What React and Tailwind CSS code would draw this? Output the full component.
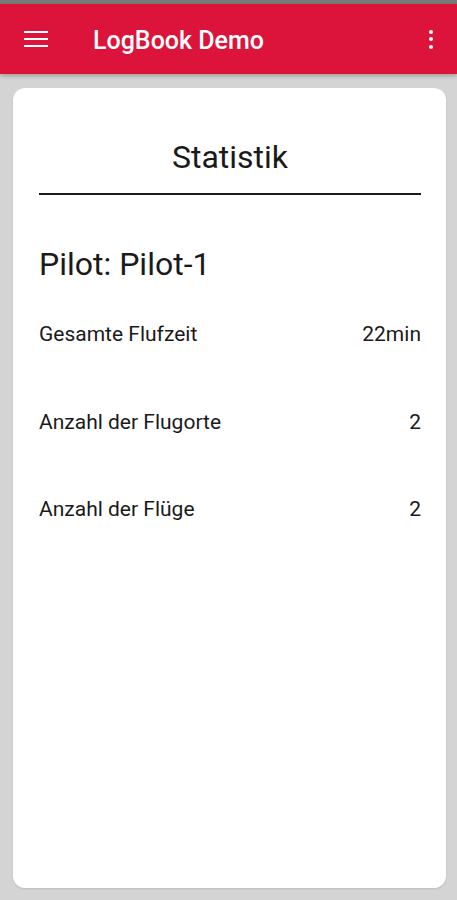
export default function App() {
  const rows = [
    ["Gesamte Flufzeit", "22min"],
    ["Anzahl der Flugorte", "2"],
    ["Anzahl der Flüge", "2"],
  ];
  return (
    <div className="w-[457px] h-[900px] bg-[#d4d4d4] flex flex-col overflow-hidden" style={{ fontFamily: "Roboto, 'Noto Sans', sans-serif" }}>
      <div className="h-[4px] bg-[#7a7a7a] shrink-0" />
      <div className="h-[70px] bg-[#dc143c] shrink-0 flex items-center relative shadow-[0_2px_4px_rgba(0,0,0,0.25)] z-10">
        <div className="ml-[24px] w-[24px] flex flex-col gap-[4.5px]">
          <div className="h-[2.5px] bg-white" />
          <div className="h-[2.5px] bg-white" />
          <div className="h-[2.5px] bg-white" />
        </div>
        <div className="ml-[45px] mt-[2px] text-white text-[25px] leading-none font-medium">LogBook Demo</div>
        <div className="ml-auto mr-[24px] flex flex-col gap-[3.5px] items-center">
          <div className="w-[4px] h-[4px] rounded-full bg-white" />
          <div className="w-[4px] h-[4px] rounded-full bg-white" />
          <div className="w-[4px] h-[4px] rounded-full bg-white" />
        </div>
      </div>
      <div className="flex-1 pl-[13px] pr-[11px] pt-[14px] pb-[12px] flex">
        <div className="flex-1 bg-white rounded-[12px] shadow-[0_1px_2px_rgba(0,0,0,0.12)] pl-[26px] pr-[25px] flex flex-col">
          <div className="h-[107px] flex items-end justify-center border-b-2 border-[#1a1a1a] pb-[20px]">
            <div className="text-[32px] text-[#1a1a1a] leading-none">Statistik</div>
          </div>
          <div className="mt-[53px] text-[32px] text-[#1a1a1a] leading-none">Pilot: Pilot-1</div>
          <div className="mt-[27px] flex flex-col">
            {rows.map(([k, v]) => (
              <div key={k} className="h-[87.5px] flex justify-between items-start text-[21px] text-[#1a1a1a] leading-none pt-[17px]">
                <span>{k}</span>
                <span>{v}</span>
              </div>
            ))}
          </div>
        </div>
      </div>
    </div>
  );
}
